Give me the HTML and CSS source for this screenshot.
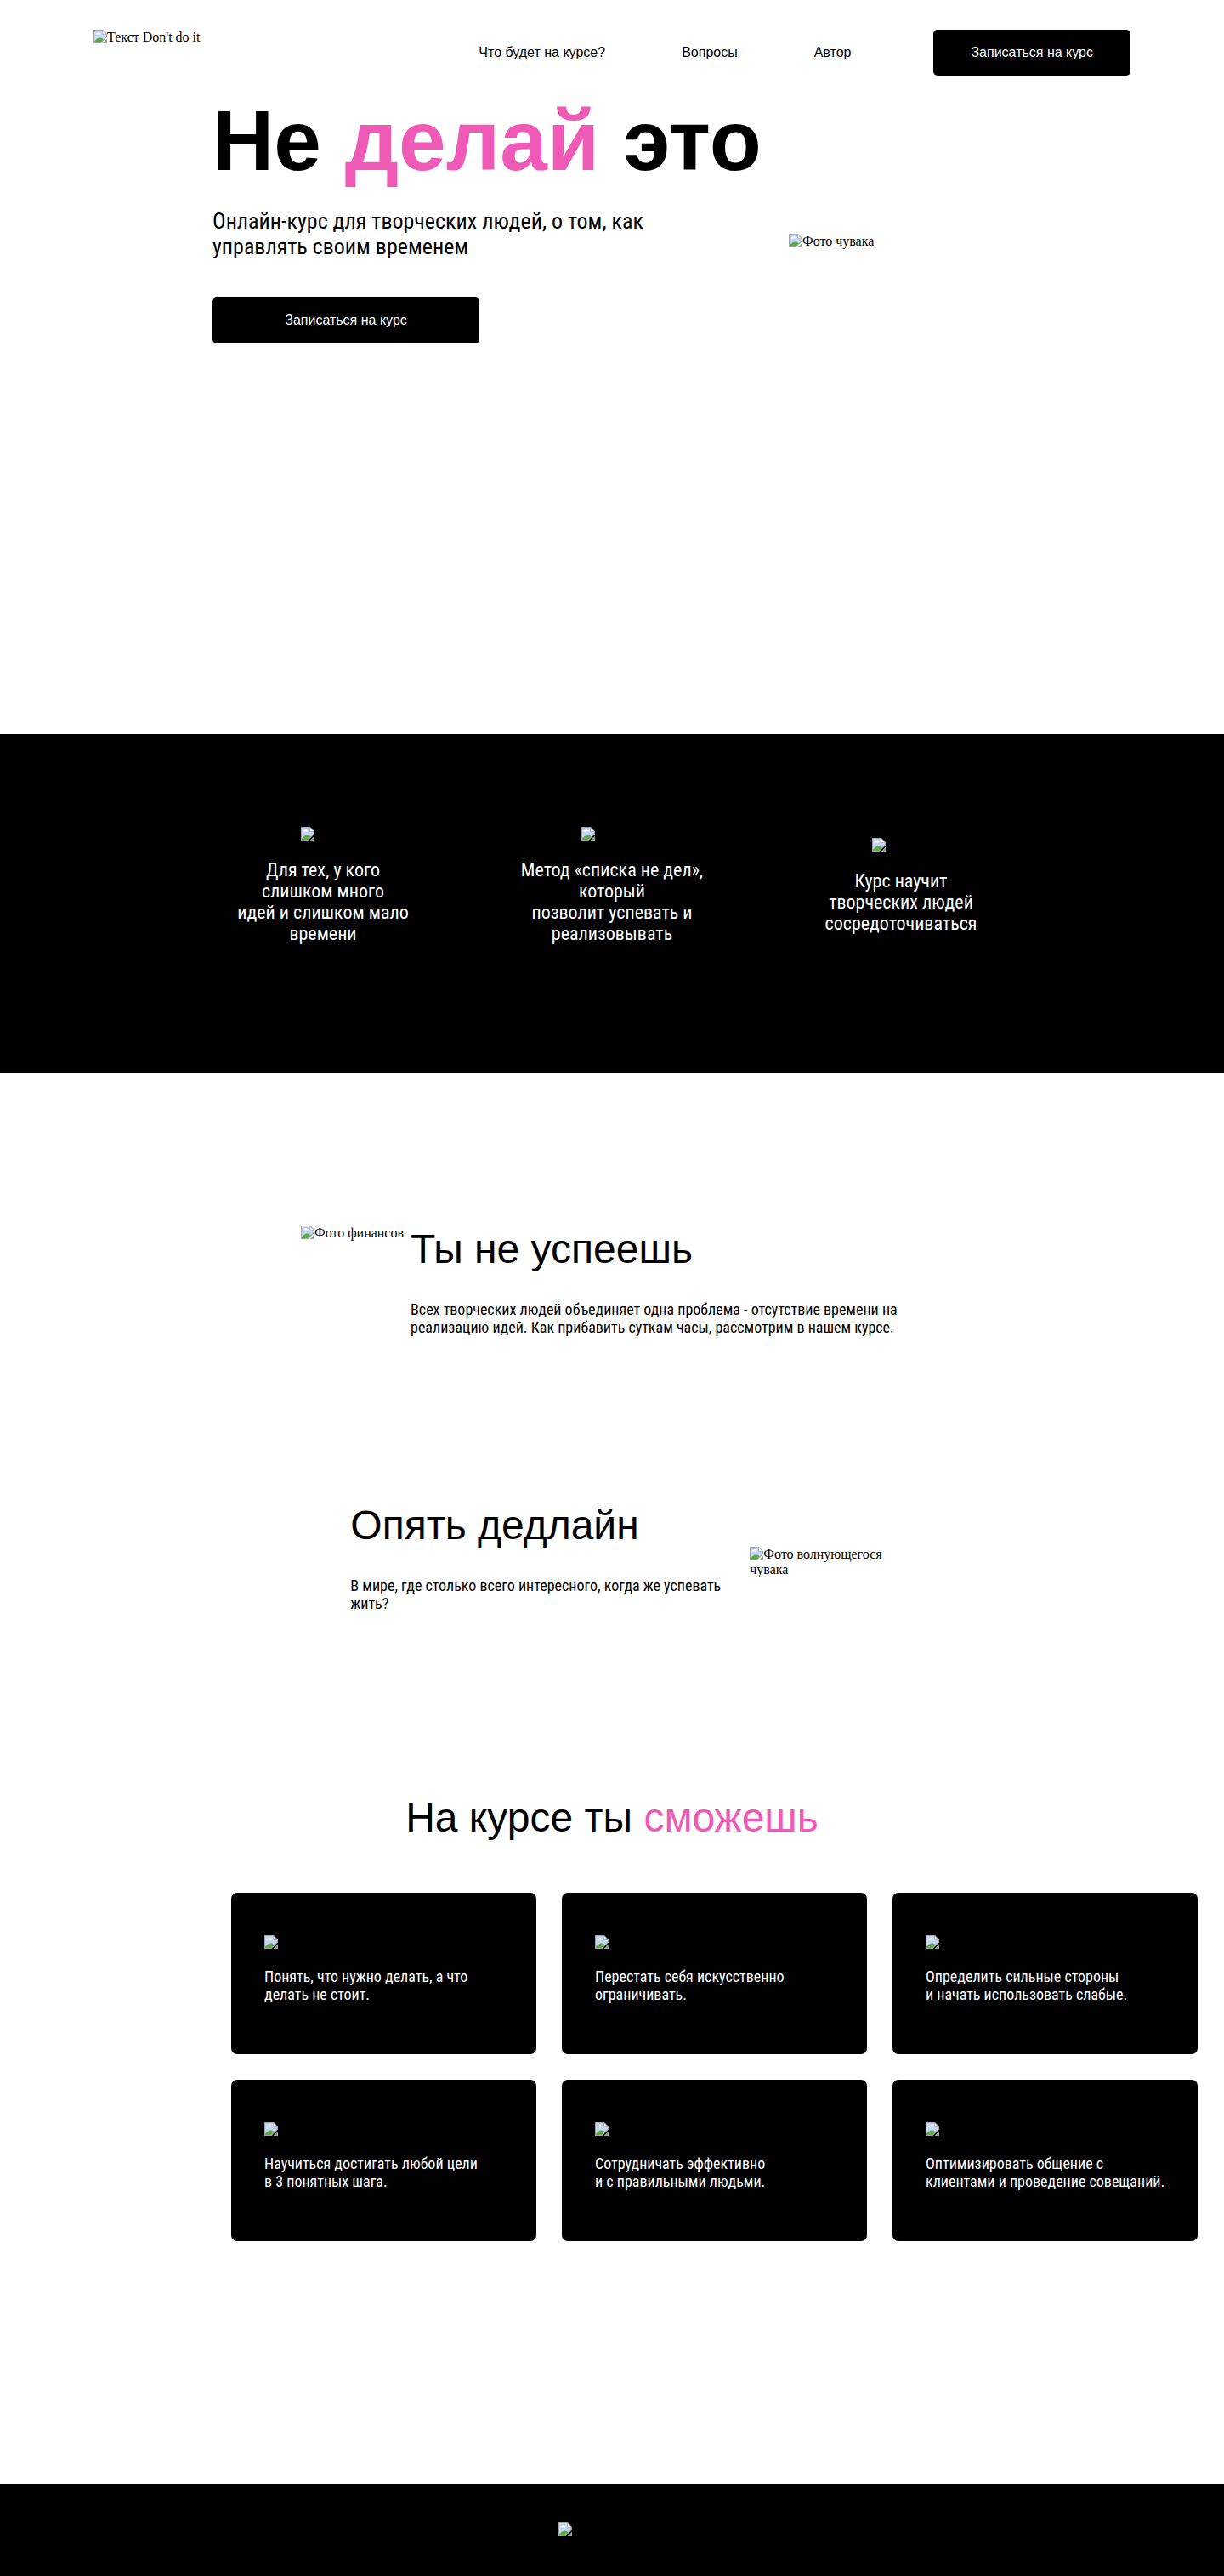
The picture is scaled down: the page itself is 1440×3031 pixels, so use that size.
FILE: index.html
```html
<!DOCTYPE html>
<html lang="ru">
<head>
<meta charset="utf-8">
<meta name="viewport" content="width=device-width, initial-scale=1">
<title>Не делай это</title>
<link rel="stylesheet" href="styles.css">
</head>
<body>
<svg class="sprite" aria-hidden="true">
  <symbol id="picture" viewBox="0 0 16 16">
    <path d="M0 0H11L16 5V8.500L8.500 16H0Z" fill="#a5a5a9"/>
    <path d="M1 1H10.500V5.500H15V8L8 15H1Z" fill="#c5d5f5"/>
    <path d="M11 1.500V5H14.500Z" fill="#fff"/>
    <path d="M2.500 5.500C2.500 4.200 4 3.900 4.500 4C5 2.700 7 2.700 7.500 4C8.700 4 9 5.500 8 5.500Z" fill="#fff"/>
    <path d="M1 15V13.500C3 11.500 5 9.500 7.500 9.500C9.500 9.500 11 10.500 11.500 11.500L8 15Z" fill="#5aab46"/>
    <path d="M16 10.500V16H10.500Z" fill="#a5a5a9"/>
    <path d="M15 13V15H13Z" fill="#5aab46"/>
  </symbol>
</svg>

<header class="header">
  <a class="photo" href="#top"><svg class="icon" aria-hidden="true"><use href="#picture"/></svg>Текст Don't do it</a>
  <nav class="nav">
    <a class="nav-link" href="#course">Что будет на курсе?</a>
    <a class="nav-link" href="#questions">Вопросы</a>
    <a class="nav-link" href="#author">Автор</a>
    <button class="button" type="button">Записаться на курс</button>
  </nav>
</header>

<main id="top">
  <section class="hero">
    <div class="hero-text">
      <h1 class="hero-title">Не <span class="accent">делай</span> это</h1>
      <p class="hero-lead">Онлайн-курс для творческих людей, о том, как управлять своим временем</p>
      <button class="button button-wide" type="button">Записаться на курс</button>
    </div>
    <div class="photo hero-photo"><svg class="icon" aria-hidden="true"><use href="#picture"/></svg>Фото чувака</div>
  </section>

  <section class="features">
    <div class="feature">
      <div class="feature-image feature-image-small"><svg class="icon" aria-hidden="true"><use href="#picture"/></svg></div>
      <p class="feature-text">Для тех, у кого<br>слишком много<br>идей и слишком мало<br>времени</p>
    </div>
    <div class="feature">
      <div class="feature-image feature-image-large"><svg class="icon" aria-hidden="true"><use href="#picture"/></svg></div>
      <p class="feature-text">Метод «списка не дел»,<br>который<br>позволит успевать и<br>реализовывать</p>
    </div>
    <div class="feature">
      <div class="feature-image feature-image-medium"><svg class="icon" aria-hidden="true"><use href="#picture"/></svg></div>
      <p class="feature-text">Курс научит<br>творческих людей<br>сосредоточиваться</p>
    </div>
  </section>

  <section class="problems" id="questions">
    <article class="problem">
      <div class="photo"><svg class="icon" aria-hidden="true"><use href="#picture"/></svg>Фото финансов</div>
      <div class="problem-text problem-text-wide">
        <h2 class="title">Ты не успеешь</h2>
        <p class="text">Всех творческих людей объединяет одна проблема - отсутствие времени на<br>реализацию идей. Как прибавить суткам часы, рассмотрим в нашем курсе.</p>
      </div>
    </article>
    <article class="problem problem-centered">
      <div class="problem-text">
        <h2 class="title">Опять дедлайн</h2>
        <p class="text">В мире, где столько всего интересного, когда же успевать<br>жить?</p>
      </div>
      <div class="photo"><svg class="icon" aria-hidden="true"><use href="#picture"/></svg>Фото волнующегося<br>чувака</div>
    </article>
  </section>

  <section class="course" id="course">
    <h2 class="title course-title">На курсе ты <span class="accent">сможешь</span></h2>
    <ul class="cards">
      <li class="card"><svg class="icon" aria-hidden="true"><use href="#picture"/></svg><p class="text">Понять, что нужно делать, а что<br>делать не стоит.</p></li>
      <li class="card"><svg class="icon" aria-hidden="true"><use href="#picture"/></svg><p class="text">Перестать себя искусственно<br>ограничивать.</p></li>
      <li class="card"><svg class="icon" aria-hidden="true"><use href="#picture"/></svg><p class="text">Определить сильные стороны<br>и начать использовать слабые.</p></li>
      <li class="card"><svg class="icon" aria-hidden="true"><use href="#picture"/></svg><p class="text">Научиться достигать любой цели<br>в 3 понятных шага.</p></li>
      <li class="card"><svg class="icon" aria-hidden="true"><use href="#picture"/></svg><p class="text">Сотрудничать эффективно<br>и с правильными людьми.</p></li>
      <li class="card"><svg class="icon" aria-hidden="true"><use href="#picture"/></svg><p class="text">Оптимизировать общение с<br>клиентами и проведение совещаний.</p></li>
    </ul>
  </section>
</main>

<footer class="footer" id="author">
  <div class="footer-logo"><svg class="icon" aria-hidden="true"><use href="#picture"/></svg></div>
</footer>
</body>
</html>
```
FILE: styles.css
```css
* {
  box-sizing: border-box;
}

body {
  margin: 0;
  background: #fff;
  color: #000;
  font: 16px/18px "Liberation Serif", "Times New Roman", serif;
}

h1, h2, p, ul {
  margin: 0;
  padding: 0;
  font-weight: 400;
}

.sprite {
  display: none;
}

.icon {
  flex: none;
  width: 16px;
  height: 16px;
  vertical-align: top;
}

.accent {
  color: #ee5ab6;
}

.photo {
  color: #000;
  text-decoration: none;
}

.header {
  display: flex;
  justify-content: space-between;
  align-items: flex-start;
  padding: 35px 110px 0;
}

.nav {
  display: flex;
  align-items: center;
  gap: 90px;
}

.nav-link {
  color: #000;
  font: 16px/18px "Liberation Sans", Arial, sans-serif;
  text-decoration: none;
}

.button {
  padding: 18px 44px;
  border: 0;
  border-radius: 5px;
  background: #000;
  color: #fff;
  font: 16px/18px "Liberation Sans", Arial, sans-serif;
}

.button-wide {
  width: 314px;
}

.nav .button {
  margin-left: 7px;
}

.hero {
  display: flex;
  align-items: flex-start;
  min-height: 775px;
  padding: 19px 250px 0;
}

.hero-text {
  display: flex;
  flex-direction: column;
  align-items: flex-start;
  flex: 0 0 678px;
}

.hero-title {
  font: 700 100px/114px "Liberation Sans", Arial, sans-serif;
}

.hero-lead {
  max-width: 540px;
  margin: 23px 0 45px;
  font: 26px/30px "Roboto Condensed", Roboto, sans-serif;
}

.hero-photo {
  margin-top: 167px;
}

.features {
  display: flex;
  justify-content: center;
  align-items: center;
  gap: 100px;
  min-height: 398px;
  padding-bottom: 42px;
  background: #000;
  color: #fff;
}

.feature {
  display: flex;
  flex-direction: column;
  align-items: center;
  gap: 20px;
  width: 240px;
}

.feature-image-small {
  width: 52px;
}

.feature-image-medium {
  width: 68px;
}

.feature-image-large {
  width: 72px;
}

.feature-text {
  font: 22px/25px "Roboto Condensed", Roboto, sans-serif;
  text-align: center;
}

.problems {
  display: flex;
  flex-direction: column;
  align-items: center;
  gap: 195px;
  padding-top: 180px;
}

.problem {
  display: flex;
  gap: 8px;
}

.problem-text-wide {
  width: 603px;
}

.problem-centered {
  align-items: center;
  gap: 34px;
  padding-left: 10px;
}

.problem-centered .photo {
  padding-top: 12px;
}

.title {
  font: 48px/56px "Liberation Sans", Arial, sans-serif;
}

.text {
  font: 18px/21px "Roboto Condensed", Roboto, sans-serif;
}

.problem .text {
  margin-top: 32px;
}

.course {
  padding-top: 214px;
}

.course-title {
  text-align: center;
}

.cards {
  display: grid;
  grid-template-columns: repeat(3, 1fr);
  gap: 30px;
  margin: 60px 31px 0 272px;
  list-style: none;
}

.card {
  display: flex;
  flex-direction: column;
  gap: 22px;
  min-height: 190px;
  padding: 50px 36px 50px 39px;
  border-radius: 7px;
  background: #000;
  color: #fff;
}

.footer {
  display: flex;
  justify-content: center;
  margin-top: 286px;
  padding: 45px 0;
  background: #000;
}

.footer-logo {
  width: 126px;
}
```
